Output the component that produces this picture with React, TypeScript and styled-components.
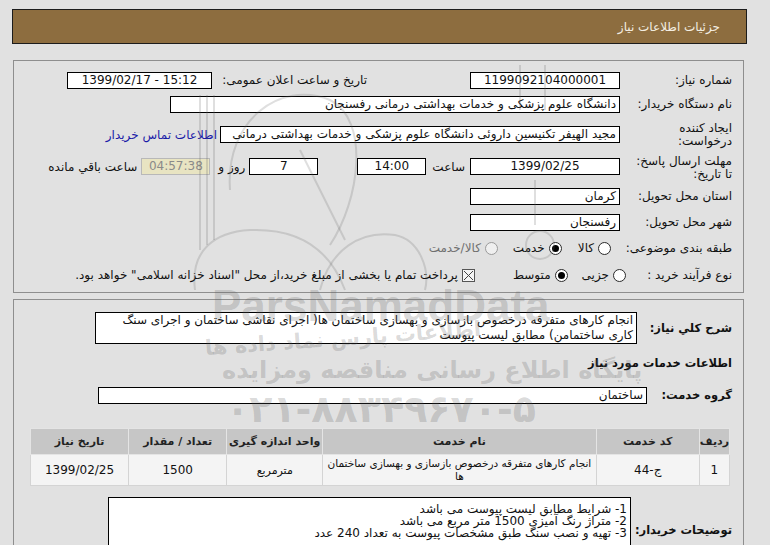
import React from 'react';
import styled, { createGlobalStyle } from 'styled-components';

const GlobalStyle = createGlobalStyle`
  html, body {
    margin: 0;
    padding: 0;
    background: #e1e1e1;
  }
  body {
    font-family: "DejaVu Sans", Tahoma, sans-serif;
    font-size: 12px;
    color: #000;
  }
`;

const Page = styled('div')`
  position: relative;
  width: 770px;
  height: 545px;
  overflow: hidden;
  padding-top: 9px;
  box-sizing: border-box;
`;

const TitleBar = styled('div')`
  margin-left: 12px;
  width: 735px;
  height: 35px;
  box-sizing: border-box;
  background: #8d6d3f;
  border: 1px solid #1c1c1c;
  display: flex;
  align-items: center;
  justify-content: flex-end;
  padding-right: 26px;
  color: #f4eee2;
  font-size: 12px;
`;

const Panel = styled('section')<{ $top: number; $height?: number }>`
  margin-top: ${({ $top }) => $top}px;
  margin-left: 13px;
  width: 731px;
  ${({ $height }) => ($height ? `height: ${$height}px;` : 'min-height: 260px;')}
  box-sizing: border-box;
  border: 1px solid #8e8e8e;
  direction: rtl;
  padding: ${({ $height }) => ($height ? '7px 11px 0 0' : '12px 11px 0 0')};
`;

const Row = styled('div')<{ $h: number; $mt?: number }>`
  display: flex;
  align-items: center;
  height: ${({ $h }) => $h}px;
  margin-top: ${({ $mt }) => $mt ?? 0}px;
  white-space: nowrap;
`;

const Label = styled('div')<{ $w?: number; $bold?: boolean; $top?: boolean }>`
  ${({ $w }) => ($w ? `width: ${$w}px;` : '')}
  flex-shrink: 0;
  text-align: right;
  line-height: 13px;
  font-size: ${({ $bold }) => ($bold ? 11.5 : 12)}px;
  font-weight: ${({ $bold }) => ($bold ? 700 : 400)};
  color: #111;
  align-self: ${({ $top }) => ($top ? 'flex-start' : 'center')};
  padding-top: ${({ $top }) => ($top ? 3 : 0)}px;
`;

const Field = styled('div')<{
  $w: number;
  $h?: number;
  $mr?: number;
  $center?: boolean;
  $muted?: boolean;
  $ltr?: boolean;
}>`
  width: ${({ $w }) => $w}px;
  height: ${({ $h }) => $h ?? 17}px;
  margin-right: ${({ $mr }) => $mr ?? 0}px;
  flex-shrink: 0;
  box-sizing: border-box;
  padding: 0 3px;
  background: ${({ $muted }) => ($muted ? '#e8e4c2' : '#fff')};
  border: 1px solid ${({ $muted }) => ($muted ? '#b8b8b8' : '#000')};
  color: ${({ $muted }) => ($muted ? '#8a8a8a' : '#111')};
  direction: ${({ $ltr }) => ($ltr ? 'ltr' : 'rtl')};
  text-align: ${({ $center }) => ($center ? 'center' : 'right')};
  line-height: ${({ $h }) => ($h ?? 17) - 2}px;
  font-size: 12px;
  overflow: hidden;
  white-space: nowrap;
`;

const TextBox = styled('div')<{ $w: number; $h: number; $mr?: number; $lh: number; $pt: number }>`
  width: ${({ $w }) => $w}px;
  min-height: ${({ $h }) => $h}px;
  margin-right: ${({ $mr }) => $mr ?? 0}px;
  box-sizing: border-box;
  background: #fff;
  border: 1px solid #000;
  padding: ${({ $pt }) => $pt}px 3px 0 3px;
  line-height: ${({ $lh }) => $lh}px;
  font-size: 12px;
  color: #111;
  text-align: right;
  white-space: nowrap;
  overflow: hidden;
`;

const Note = styled('span')<{ $mr?: number }>`
  margin-right: ${({ $mr }) => $mr ?? 0}px;
  color: #111;
`;

const ContactLink = styled('a')`
  margin-right: 3px;
  color: #1b1ba8;
  text-decoration: none;
  font-size: 12px;
`;

const Option = styled('span')<{ $mr?: number; $disabled?: boolean }>`
  display: inline-flex;
  align-items: center;
  gap: 4px;
  margin-right: ${({ $mr }) => $mr ?? 0}px;
  color: ${({ $disabled }) => ($disabled ? '#6f6f6f' : '#111')};
`;

const RadioDot = styled('span')<{ $checked?: boolean; $disabled?: boolean }>`
  width: 13px;
  height: 13px;
  box-sizing: border-box;
  border-radius: 50%;
  border: 1px solid ${({ $disabled }) => ($disabled ? '#9a9a9a' : '#2a2a2a')};
  background: ${({ $disabled }) => ($disabled ? '#efefef' : '#fff')};
  display: inline-flex;
  align-items: center;
  justify-content: center;
  &::after {
    content: '';
    width: 7px;
    height: 7px;
    border-radius: 50%;
    background: ${({ $checked }) => ($checked ? '#000' : 'transparent')};
  }
`;

const CheckBox = styled('svg')`
  width: 13px;
  height: 13px;
  flex-shrink: 0;
`;

const ItemsTable = styled('table')`
  margin-top: 19px;
  margin-right: 2px;
  width: 700px;
  border-collapse: collapse;
  font-size: 12px;
`;

const Th = styled('th')<{ $w: number }>`
  width: ${({ $w }) => $w}px;
  height: 25px;
  padding: 0;
  background: #c6c6c6;
  border: 1px solid #e4e4e4;
  font-size: 11px;
  font-weight: 700;
  color: #222;
  text-align: center;
`;

const Td = styled('td')<{ $small?: boolean; $tight?: boolean }>`
  height: 30px;
  padding: 0 ${({ $tight }) => ($tight ? 0 : 2)}px;
  background: #f4f4f4;
  border: 1px solid #d4d4d4;
  text-align: center;
  line-height: 13px;
  font-size: ${({ $small, $tight }) => ($tight ? 10.5 : $small ? 11 : 12)}px;
  white-space: ${({ $tight }) => ($tight ? 'nowrap' : 'normal')};
  color: #111;
`;

const Watermark = styled('div')`
  position: absolute;
  inset: 0;
  pointer-events: none;
  color: rgba(95, 95, 95, 0.24);
`;

const MarkText = styled('div')<{
  $x: number;
  $y: number;
  $size: number;
  $font?: string;
  $tilt?: number;
}>`
  position: absolute;
  left: ${({ $x }) => $x}px;
  top: ${({ $y }) => $y}px;
  font-size: ${({ $size }) => $size}px;
  font-family: ${({ $font }) => $font ?? '"DejaVu Sans", sans-serif'};
  font-weight: 700;
  white-space: nowrap;
  line-height: 1;
  transform: rotate(${({ $tilt }) => $tilt ?? 0}deg);
  transform-origin: left center;
`;

const LogoSketch = styled('svg')`
  position: absolute;
  left: 0;
  top: 0;
`;

const App = () => {
  return (
    <Page>
      <GlobalStyle />
      <TitleBar>جزئیات اطلاعات نیاز</TitleBar>

      <Panel $top={16} $height={233}>
        <Row $h={24}>
          <Label $w={112}>شماره نیاز:</Label>
          <Field $w={150} $center>1199092104000001</Field>
          <Label $w={150} style={{ marginRight: 103 }}>تاریخ و ساعت اعلان عمومی:</Label>
          <Field $w={145} $mr={5} $center $ltr>1399/02/17 - 15:12</Field>
        </Row>
        <Row $h={25}>
          <Label $w={112}>نام دستگاه خریدار:</Label>
          <Field $w={450}>دانشگاه علوم پزشکی و خدمات بهداشتی درمانی رفسنجان</Field>
        </Row>
        <Row $h={35}>
          <Label $w={112}>
            ایجاد کننده
            <br />
            درخواست:
          </Label>
          <Field $w={400}>مجید الهیفر تکنیسین داروئی دانشگاه علوم پزشکی و خدمات بهداشتی درمانی</Field>
          <ContactLink href="#">اطلاعات تماس خریدار</ContactLink>
        </Row>
        <Row $h={29}>
          <Label $w={112} $top>
            مهلت ارسال پاسخ:
            <br />
            تا تاریخ:
          </Label>
          <Field $w={150} $center>1399/02/25</Field>
          <Note $mr={5}>ساعت</Note>
          <Field $w={69} $mr={6} $center>14:00</Field>
          <Field $w={69} $mr={39} $center>7</Field>
          <Note $mr={4}>روز و</Note>
          <Field $w={69} $mr={8} $center $muted>04:57:38</Field>
          <Note $mr={4}>ساعت باقي مانده</Note>
        </Row>
        <Row $h={30}>
          <Label $w={112}>استان محل تحویل:</Label>
          <Field $w={150}>کرمان</Field>
        </Row>
        <Row $h={23}>
          <Label $w={112}>شهر محل تحویل:</Label>
          <Field $w={150}>رفسنجان</Field>
        </Row>
        <Row $h={28}>
          <Label $w={121}>طبقه بندی موضوعی:</Label>
          <Option>
            <RadioDot />
            کالا
          </Option>
          <Option $mr={16}>
            <RadioDot $checked />
            خدمت
          </Option>
          <Option $mr={15} $disabled>
            <RadioDot $disabled />
            کالا/خدمت
          </Option>
        </Row>
        <Row $h={26}>
          <Label $w={106}>نوع فرآیند خرید :</Label>
          <Option>
            <RadioDot />
            جزیی
          </Option>
          <Option $mr={14}>
            <RadioDot $checked />
            متوسط
          </Option>
          <Option $mr={38}>
            <CheckBox viewBox="0 0 13 13">
              <rect x="0.5" y="0.5" width="12" height="12" fill="#f4f4f4" stroke="#555" />
              <path d="M2 2 L11 11 M11 2 L2 11" stroke="#444" strokeWidth="1" />
            </CheckBox>
            پرداخت تمام یا بخشی از مبلغ خرید،از محل "اسناد خزانه اسلامی" خواهد بود.
          </Option>
        </Row>
      </Panel>

      <Panel $top={6}>
        <Row $h={32}>
          <Label $w={95} $bold>شرح کلي نیاز:</Label>
          <TextBox $w={542} $h={32} $lh={15} $pt={0}>
            انجام کارهای متفرقه درخصوص بازسازی و بهسازی ساختمان ها( اجرای نقاشی ساختمان و اجرای سنگ
            <br />
            کاری ساختمامن) مطابق لیست پیوست
          </TextBox>
        </Row>
        <Row $h={38}>
          <Label $bold>اطلاعات خدمات مورد نیاز</Label>
        </Row>
        <Row $h={27}>
          <Label $w={85} $bold>گروه خدمت:</Label>
          <Field $w={549}>ساختمان</Field>
        </Row>

        <ItemsTable>
          <thead>
            <tr>
              <Th $w={27}>ردیف</Th>
              <Th $w={105}>کد خدمت</Th>
              <Th $w={273}>نام خدمت</Th>
              <Th $w={97}>واحد اندازه گیری</Th>
              <Th $w={100}>تعداد / مقدار</Th>
              <Th $w={98}>تاریخ نیاز</Th>
            </tr>
          </thead>
          <tbody>
            <tr>
              <Td>1</Td>
              <Td>ج-44</Td>
              <Td $tight>
                انجام کارهای متفرقه درخصوص بازسازی و بهسازی ساختمان
                <br />
                ها
              </Td>
              <Td $small>مترمربع</Td>
              <Td>1500</Td>
              <Td>1399/02/25</Td>
            </tr>
          </tbody>
        </ItemsTable>

        <Row $h={66} $mt={11}>
          <Label $w={101} $bold>توضیحات خریدار:</Label>
          <TextBox $w={523} $h={66} $lh={12} $pt={5}>
            1- شرایط مطابق لیست پیوست می باشد
            <br />
            2- متراژ رنگ آمیزی 1500 متر مربع می باشد
            <br />
            3- تهیه و نصب سنگ طبق مشخصات پیوست به تعداد 240 عدد
          </TextBox>
        </Row>
      </Panel>

      <Watermark>
        <LogoSketch width="770" height="545" viewBox="0 0 770 545" fill="none" stroke="rgba(95,95,95,0.2)" strokeWidth="2">
          <path d="M200 95 V250 M207 95 V245 M214 95 V240" />
          <path d="M230 190 C225 120 280 80 330 100 C370 120 360 200 330 245" />
          <path d="M195 290 C190 250 215 232 250 230 C300 228 330 250 345 290" />
          <path d="M320 290 C330 250 360 230 395 235 C420 240 430 270 425 290" />
          <path d="M345 240 L300 150" />
          <path d="M520 65 V110 M545 65 V110" />
          <path d="M535 180 V225" />
          <circle cx="540" cy="245" r="14" />
        </LogoSketch>
        <MarkText $x={212} $y={284} $size={44} $font='"Liberation Sans", Arial, sans-serif'>
          ParsNamadData
        </MarkText>
        <MarkText $x={205} $y={338} $size={21} $tilt={-4}>
          اطلاعات پارس نماد داده ها
        </MarkText>
        <MarkText $x={222} $y={358} $size={24}>
          پایگاه اطلاع رسانی مناقصه ومزایده
        </MarkText>
        <MarkText $x={226} $y={390} $size={38}>
          ۰۲۱-۸۸۳۴۹۶۷۰-۵
        </MarkText>
      </Watermark>
    </Page>
  );
};

export default App;
